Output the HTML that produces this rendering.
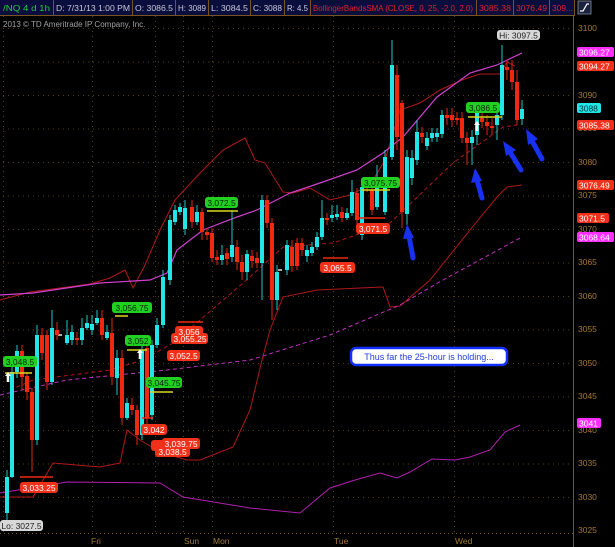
<!DOCTYPE html>
<html><head><meta charset="utf-8"><style>
html,body{margin:0;padding:0;background:#000;}
body{width:615px;height:547px;overflow:hidden;font-family:"Liberation Sans",sans-serif;}
svg{display:block}
</style></head><body>
<svg width="615" height="547" viewBox="0 0 615 547" xmlns="http://www.w3.org/2000/svg" font-family="Liberation Sans, sans-serif">
<rect width="615" height="547" fill="#000"/>
<!-- header -->
<rect x="0" y="0" width="575" height="15" fill="#0a0e3c"/>
<g stroke="#7a5420" stroke-width="1">
<line x1="53.5" y1="0" x2="53.5" y2="15"/><line x1="132.5" y1="0" x2="132.5" y2="15"/><line x1="175.5" y1="0" x2="175.5" y2="15"/><line x1="208.5" y1="0" x2="208.5" y2="15"/><line x1="250.5" y1="0" x2="250.5" y2="15"/><line x1="284.5" y1="0" x2="284.5" y2="15"/><line x1="310.5" y1="0" x2="310.5" y2="15"/><line x1="476.5" y1="0" x2="476.5" y2="15"/><line x1="513.5" y1="0" x2="513.5" y2="15"/><line x1="549.5" y1="0" x2="549.5" y2="15"/><line x1="574.5" y1="0" x2="574.5" y2="15"/>
<line x1="0" y1="15.5" x2="575" y2="15.5"/>
</g>
<g font-size="8.5" fill="#c8c8d8">
<text x="3" y="11" fill="#22cc44" textLength="47" lengthAdjust="spacingAndGlyphs">/NQ 4 d 1h</text>
<text x="56" y="11" textLength="74" lengthAdjust="spacingAndGlyphs">D: 7/31/13 1:00 PM</text>
<text x="135" y="11" textLength="38" lengthAdjust="spacingAndGlyphs">O: 3086.5</text>
<text x="178" y="11" textLength="28" lengthAdjust="spacingAndGlyphs">H: 3089</text>
<text x="211" y="11" textLength="37" lengthAdjust="spacingAndGlyphs">L: 3084.5</text>
<text x="253" y="11" textLength="29" lengthAdjust="spacingAndGlyphs">C: 3088</text>
<text x="287" y="11" textLength="21" lengthAdjust="spacingAndGlyphs">R: 4.5</text>
<text x="313" y="11" fill="#e0202a" textLength="160" lengthAdjust="spacingAndGlyphs">BollingerBandsSMA (CLOSE, 0, 25, -2.0, 2.0)</text>
<text x="479" y="11" fill="#e0202a" textLength="32" lengthAdjust="spacingAndGlyphs">3085.38</text>
<text x="516" y="11" fill="#e0202a" textLength="31" lengthAdjust="spacingAndGlyphs">3076.49</text>
<text x="552" y="11" fill="#e0202a" textLength="21" lengthAdjust="spacingAndGlyphs">309...</text>
</g>
<rect x="578" y="1" width="13" height="13" fill="#1a2240" stroke="#8890a0" stroke-width="0.8"/>
<path d="M580 11 L583 11 L587 4 L589 4" stroke="#fff" fill="none" stroke-width="1.2"/>
<text x="3" y="27" font-size="8" fill="#a0a0a0">2013 © TD Ameritrade IP Company, Inc.</text>
<!-- grid -->
<g stroke="#6b5020" stroke-width="0.8" stroke-dasharray="1,4">
<line x1="3" y1="28.5" x2="573" y2="28.5"/><line x1="3" y1="62" x2="573" y2="62"/><line x1="3" y1="95.5" x2="573" y2="95.5"/><line x1="3" y1="129" x2="573" y2="129"/><line x1="3" y1="162.5" x2="573" y2="162.5"/><line x1="3" y1="196" x2="573" y2="196"/><line x1="3" y1="229.5" x2="573" y2="229.5"/><line x1="3" y1="263" x2="573" y2="263"/><line x1="3" y1="296.5" x2="573" y2="296.5"/><line x1="3" y1="330" x2="573" y2="330"/><line x1="3" y1="363.5" x2="573" y2="363.5"/><line x1="3" y1="397" x2="573" y2="397"/><line x1="3" y1="430.5" x2="573" y2="430.5"/><line x1="3" y1="464" x2="573" y2="464"/><line x1="3" y1="497.5" x2="573" y2="497.5"/>
<line x1="3.5" y1="16" x2="3.5" y2="533"/><line x1="92.5" y1="16" x2="92.5" y2="533"/><line x1="155.5" y1="16" x2="155.5" y2="533"/><line x1="183.5" y1="16" x2="183.5" y2="533"/><line x1="212.5" y1="16" x2="212.5" y2="533"/><line x1="333.5" y1="16" x2="333.5" y2="533"/><line x1="454.5" y1="16" x2="454.5" y2="533"/>
</g>
<line x1="573.5" y1="16" x2="573.5" y2="547" stroke="#7a5420"/>
<line x1="0" y1="533.5" x2="573" y2="533.5" stroke="#7a5420" stroke-dasharray="1,3"/>
<g font-size="8.5" fill="#a07838">
<text x="578" y="31">3100</text><text x="578" y="98">3090</text><text x="578" y="131">3085</text><text x="578" y="165">3080</text><text x="578" y="198">3075</text><text x="578" y="232">3070</text><text x="578" y="265">3065</text><text x="578" y="299">3060</text><text x="578" y="332">3055</text><text x="578" y="366">3050</text><text x="578" y="399">3045</text><text x="578" y="433">3040</text><text x="578" y="466">3035</text><text x="578" y="500">3030</text><text x="578" y="533">3025</text>
<text x="91" y="544">Fri</text><text x="184" y="544">Sun</text><text x="213" y="544">Mon</text><text x="334" y="544">Tue</text><text x="455" y="544">Wed</text>
</g>
<!-- bands -->
<g fill="none" stroke-width="1">
<path stroke="#b01818" d="M0 300 L30 292 L60 288 L90 284 L110 278 L125 270 L133 288 L145 265 L160 230 L175 200 L200 173 L223 150 L245 138 L255 160 L265 163 L283 192 L293 193 L310 188 L330 200 L350 195 L370 185 L385 160 L400 110 L420 103 L440 90 L462 80 L480 74 L500 74 L507 62 L515 66"/>
<path stroke="#d040d0" stroke-width="1.2" d="M0 295 L33 293 L100 283 L150 280 L167 273 L177 250 L203 230 L237 217 L257 210 L290 193 L320 183 L357 170 L383 153 L403 137 L437 97 L470 73 L497 65 L522 53"/>
<path stroke="#b01818" d="M0 497 L33 497 L53 463 L100 467 L120 463 L127 430 L140 440 L160 452 L187 460 L200 460 L233 447 L250 410 L262 360 L270 330 L283 297 L317 290 L383 287 L390 307 L400 306 L430 280 L470 230 L497 197 L507 187 L522 185"/>
<path stroke="#b01818" stroke-dasharray="4,3" d="M10 390 L33 380 L110 370 L143 360 L173 343 L200 320 L250 277 L283 247 L333 243 L390 223 L453 163 L503 127 L517 125"/>
<path stroke="#c030c0" stroke-dasharray="4,3" d="M0 395 L67 380 L167 370 L250 360 L330 335 L400 305 L443 280 L520 238"/>
<path stroke="#b020b0" d="M0 493 L67 482 L160 483 L183 497 L250 508 L300 513 L330 488 L355 480 L380 473 L397 478 L410 472 L432 459 L455 460 L470 457 L490 450 L505 432 L520 425"/>
</g>
<!-- wicks -->
<g stroke="#20c8c8" stroke-width="1">
<path d="M7 470V522M12 360V478M17 345V378M37 325V445M52 310V385M67 320V345M72 325V345M82 318V345M87 315V330M92 315V335M97 310V325M107 325V340M117 350V395M127 398V420M142 345V440M152 340V420M157 318V348M163 270V328M170 215V285M175 205V225M180 203V215M185 200V235M197 205V225M222 245V265M232 210V262M247 250V280M262 195V300M277 265V310M287 240V275M307 245V262M312 242V256M317 232V250M322 200V240M332 205V222M337 205V220M347 208V220M352 180V216M362 180V240M377 165V210M385 150V215M392 40V160M407 150V225M412 150V185M417 120V165M427 132V150M432 128V142M437 128V142M442 110V138M472 130V165M477 105V145M497 105V140M502 45V120M522 100V125"/>
</g>
<g stroke="#e02810" stroke-width="1">
<path d="M22 345V390M27 372V400M32 388V472M42 328V360M47 330V390M57 322V340M77 332V345M102 310V340M112 318V385M122 350V425M132 398V415M137 405V445M147 342V425M192 200V228M202 208V240M207 228V240M212 228V262M217 250V265M227 248V265M237 240V270M242 255V280M252 250V268M257 252V268M267 195V228M272 218V320M292 240V272M297 238V270M302 238V256M327 213V225M342 207V222M357 188V225M367 180V192M372 185V215M397 65V150M402 100V228M422 127V143M447 108V125M452 108V127M457 112V125M462 112V143M467 132V165M482 112V128M487 115V135M492 118V135M507 60V80M512 60V90M517 70V125"/>
</g>
<!-- cyan bodies -->
<g fill="#22e5e5">
<rect x="5" y="477" width="4" height="36"/><rect x="10" y="372" width="4" height="105"/><rect x="15" y="351" width="4" height="21"/><rect x="35" y="335" width="4" height="105"/><rect x="50" y="328" width="4" height="54"/><rect x="65" y="335" width="4" height="8"/><rect x="70" y="332" width="4" height="8"/><rect x="80" y="328" width="4" height="12"/><rect x="85" y="323" width="4" height="5"/><rect x="90" y="324" width="4" height="6"/><rect x="95" y="318" width="4" height="5"/><rect x="105" y="332" width="4" height="6"/><rect x="115" y="358" width="4" height="20"/><rect x="125" y="403" width="4" height="15"/><rect x="140" y="350" width="4" height="85"/><rect x="150" y="345" width="4" height="70"/><rect x="155" y="325" width="4" height="20"/><rect x="161" y="277" width="4" height="48"/><rect x="168" y="220" width="4" height="60"/><rect x="173" y="210" width="4" height="12"/><rect x="178" y="207" width="4" height="5"/><rect x="183" y="208" width="4" height="21"/><rect x="195" y="212" width="4" height="10"/><rect x="220" y="255" width="4" height="5"/><rect x="230" y="245" width="4" height="12"/><rect x="245" y="254" width="4" height="18"/><rect x="260" y="200" width="4" height="63"/><rect x="275" y="272" width="4" height="28"/><rect x="285" y="245" width="4" height="25"/><rect x="305" y="250" width="4" height="6"/><rect x="310" y="247" width="4" height="6"/><rect x="315" y="237" width="4" height="10"/><rect x="320" y="218" width="4" height="19"/><rect x="330" y="215" width="4" height="3"/><rect x="335" y="214" width="4" height="3"/><rect x="345" y="213" width="4" height="5"/><rect x="350" y="192" width="4" height="21"/><rect x="360" y="187" width="4" height="48"/><rect x="375" y="177" width="4" height="30"/><rect x="383" y="157" width="4" height="55"/><rect x="390" y="65" width="4" height="92"/><rect x="405" y="157" width="4" height="57"/><rect x="410" y="158" width="4" height="20"/><rect x="415" y="132" width="4" height="28"/><rect x="425" y="138" width="4" height="8"/><rect x="430" y="133" width="4" height="5"/><rect x="435" y="133" width="4" height="4"/><rect x="440" y="115" width="4" height="19"/><rect x="470" y="137" width="4" height="6"/><rect x="475" y="113" width="4" height="22"/><rect x="495" y="115" width="4" height="10"/><rect x="500" y="65" width="4" height="50"/><rect x="520" y="109" width="4" height="10"/>
</g>
<rect x="278" y="269" width="4" height="2" fill="#aaa"/><rect x="58" y="334" width="4" height="2" fill="#aaa"/>
<g fill="#f02810">
<rect x="20" y="351" width="4" height="26"/><rect x="25" y="376" width="4" height="16"/><rect x="30" y="392" width="4" height="48"/><rect x="40" y="335" width="4" height="18"/><rect x="45" y="335" width="4" height="47"/><rect x="55" y="330" width="4" height="5"/><rect x="75" y="338" width="4" height="2"/><rect x="100" y="318" width="4" height="17"/><rect x="110" y="333" width="4" height="44"/><rect x="120" y="358" width="4" height="60"/><rect x="130" y="405" width="4" height="5"/><rect x="135" y="410" width="4" height="25"/><rect x="145" y="348" width="4" height="70"/><rect x="190" y="207" width="4" height="15"/><rect x="200" y="212" width="4" height="20"/><rect x="205" y="232" width="4" height="3"/><rect x="210" y="233" width="4" height="25"/><rect x="215" y="257" width="4" height="3"/><rect x="225" y="253" width="4" height="6"/><rect x="235" y="247" width="4" height="15"/><rect x="240" y="262" width="4" height="10"/><rect x="250" y="256" width="4" height="5"/><rect x="255" y="258" width="4" height="5"/><rect x="265" y="200" width="4" height="23"/><rect x="270" y="223" width="4" height="77"/><rect x="290" y="247" width="4" height="19"/><rect x="295" y="243" width="4" height="23"/><rect x="300" y="243" width="4" height="7"/><rect x="325" y="218" width="4" height="2"/><rect x="340" y="212" width="4" height="6"/><rect x="355" y="193" width="4" height="27"/><rect x="365" y="185" width="4" height="2"/><rect x="370" y="190" width="4" height="20"/><rect x="395" y="75" width="4" height="62"/><rect x="400" y="103" width="4" height="109"/><rect x="420" y="133" width="4" height="4"/><rect x="445" y="115" width="4" height="3"/><rect x="450" y="115" width="4" height="5"/><rect x="455" y="118" width="4" height="2"/><rect x="460" y="118" width="4" height="20"/><rect x="465" y="138" width="4" height="5"/><rect x="480" y="118" width="4" height="4"/><rect x="485" y="122" width="4" height="4"/><rect x="490" y="126" width="4" height="2"/><rect x="505" y="67" width="4" height="3"/><rect x="510" y="70" width="4" height="12"/><rect x="515" y="82" width="4" height="38"/>
</g>
<!-- marker lines -->
<g stroke="#d8d820" stroke-width="1.5">
<line x1="5" y1="373" x2="32" y2="373"/><line x1="115" y1="316" x2="128" y2="316"/><line x1="127" y1="350" x2="147" y2="350"/><line x1="150" y1="392" x2="173" y2="392"/><line x1="207" y1="211" x2="238" y2="211"/><line x1="362" y1="190" x2="390" y2="190"/><line x1="468" y1="117" x2="502" y2="117"/>
</g>
<g stroke="#f02810" stroke-width="1.5">
<line x1="20" y1="477" x2="53" y2="477"/><line x1="178" y1="322" x2="203" y2="322"/><line x1="355" y1="218" x2="385" y2="218"/><line x1="323" y1="258" x2="348" y2="258"/><line x1="142" y1="418" x2="153" y2="418"/>
</g>
<!-- white arrows -->
<g fill="#fff"><path d="M8 372 L11 376 L9.3 376 L9.3 382 L6.7 382 L6.7 376 L5 376Z"/><path d="M140 349 L143 353 L141.3 353 L141.3 359 L138.7 359 L138.7 353 L137 353Z"/><path d="M477 121 L480 125 L478.3 125 L478.3 131 L475.7 131 L475.7 125 L474 125Z"/></g>
<!-- labels -->
<g font-size="8.5" text-anchor="middle">
<g fill="#22d022"><rect x="3" y="356" width="34" height="11" rx="3"/><rect x="112" y="302" width="40" height="11" rx="3"/><rect x="125" y="335" width="26" height="11" rx="3"/><rect x="146" y="377" width="36" height="11" rx="3"/><rect x="205" y="197" width="33" height="11" rx="3"/><rect x="361" y="177" width="39" height="11" rx="3"/><rect x="466" y="102" width="34" height="11" rx="3"/></g>
<g fill="#062006"><text x="20" y="365">3,048.5</text><text x="132" y="311">3,056.75</text><text x="138" y="344">3,052</text><text x="164" y="386">3,045.75</text><text x="221.5" y="206">3,072.5</text><text x="380.5" y="186">3,075.75</text><text x="483" y="111">3,086.5</text></g>
<g fill="#f03018"><rect x="20" y="482" width="38" height="11" rx="3"/><rect x="171" y="333" width="37" height="11" rx="3"/><rect x="175" y="326" width="28" height="11" rx="3"/><rect x="167" y="350" width="33" height="11" rx="3"/><rect x="141" y="424" width="26" height="11" rx="3"/><rect x="151" y="440" width="14" height="11" rx="3"/><rect x="162" y="438" width="38" height="11" rx="3"/><rect x="155" y="446" width="35" height="11" rx="3"/><rect x="356" y="223" width="34" height="11" rx="3"/><rect x="320" y="262" width="35" height="11" rx="3"/></g>
<g fill="#fff"><text x="39" y="491">3,033.25</text><text x="190" y="342">3,055.25</text><text x="189" y="335">3,056</text><text x="183.5" y="359">3,052.5</text><text x="154" y="433">3,042</text><text x="181" y="447">3,039.75</text><text x="172.5" y="455">3,038.5</text><text x="373" y="232">3,071.5</text><text x="337.5" y="271">3,065.5</text></g>
<rect x="0" y="520" width="43" height="11" rx="3" fill="#d8d8d8"/><text x="21.5" y="529" fill="#222">Lo: 3027.5</text>
<rect x="497" y="30" width="43" height="10" rx="3" fill="#d8d8d8"/><text x="518.5" y="38.5" fill="#222">Hi: 3097.5</text>
</g>
<!-- right price tags -->
<g font-size="8.5">
<rect x="577" y="47" width="37" height="10" rx="2" fill="#ff30ff"/><text x="579" y="55.5" fill="#fff">3096.27</text>
<rect x="577" y="61" width="37" height="10" rx="2" fill="#f03018"/><text x="579" y="69.5" fill="#fff">3094.27</text>
<rect x="577" y="103" width="24" height="10" rx="2" fill="#22e5e5"/><text x="579" y="111.5" fill="#033">3088</text>
<rect x="577" y="120" width="37" height="10" rx="2" fill="#f03018"/><text x="579" y="128.5" fill="#fff">3085.38</text>
<rect x="577" y="180" width="37" height="10" rx="2" fill="#f03018"/><text x="579" y="188.5" fill="#fff">3076.49</text>
<rect x="577" y="213" width="32" height="10" rx="2" fill="#f03018"/><text x="579" y="221.5" fill="#fff">3071.5</text>
<rect x="577" y="232" width="37" height="10" rx="2" fill="#ff30ff"/><text x="579" y="240.5" fill="#fff">3068.64</text>
<rect x="577" y="418" width="24" height="10" rx="2" fill="#ff30ff"/><text x="579" y="426.5" fill="#fff">3041</text>
</g>
<!-- blue arrows -->
<g stroke="#1830f0" stroke-width="5" stroke-linecap="round" fill="#1830f0">
<line x1="413" y1="258" x2="409" y2="236"/><line x1="482" y1="198" x2="477" y2="180"/><line x1="521" y1="170" x2="510" y2="152"/><line x1="542" y1="159" x2="532" y2="141"/>
</g>
<g fill="#1830f0">
<path d="M407 224 L414 238 L403 239Z"/><path d="M475 168 L482 181 L471 183Z"/><path d="M503 141 L516 150 L506 156Z"/><path d="M526 129 L538 139 L528 145Z"/>
</g>
<!-- callout -->
<rect x="351" y="348" width="156" height="17" rx="5" fill="#fff" stroke="#1030ff" stroke-width="2.5"/>
<text x="429" y="360" font-size="9" fill="#2040e0" text-anchor="middle">Thus far the 25-hour is holding...</text>
</svg>
</body></html>
